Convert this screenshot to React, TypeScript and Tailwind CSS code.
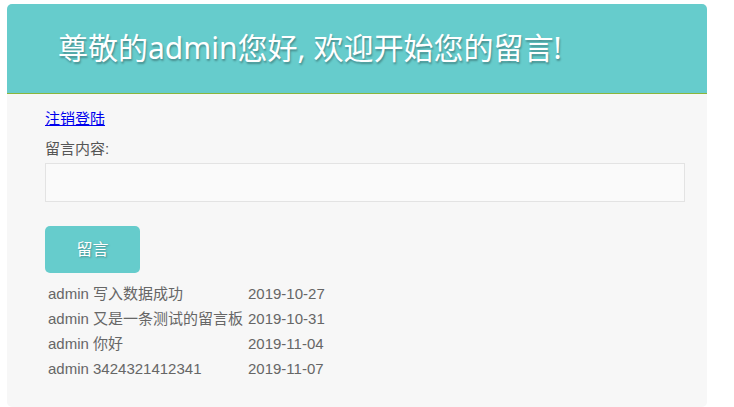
const messages = [
	{ user: "admin", content: "写入数据成功", date: "2019-10-27" },
	{ user: "admin", content: "又是一条测试的留言板", date: "2019-10-31" },
	{ user: "admin", content: "你好", date: "2019-11-04" },
	{ user: "admin", content: "3424321412341", date: "2019-11-07" },
];

const App = () => {
	return (
		<div className="min-h-[407px] bg-white pl-[7px] pt-[4px] font-['Liberation_Sans','Noto_Sans_CJK_SC',sans-serif]">
			<div className="w-[700px] overflow-hidden rounded-[5px] bg-[#f7f7f7]">
				<div className="flex h-[90px] items-center border-b border-[#8ab63c] bg-[#66cccc] pb-[2px] pl-[51px]">
					<h1 className="font-['Noto_Sans','Noto_Sans_CJK_SC',sans-serif] text-[30px] font-normal text-white [text-shadow:1px_2px_2px_rgba(0,0,0,0.3)]">
						尊敬的admin您好, 欢迎开始您的留言!
					</h1>
				</div>
				<div className="pb-[25px] pl-[38px] pt-[14px]">
					<div className="leading-[22px]">
						<a href="#" className="text-[15px] text-[#0000ee] underline">
							注销登陆
						</a>
					</div>
					<form className="mt-[9px] flex flex-col">
						<label className="text-[15px] leading-[20px] text-[#555]">留言内容:</label>
						<input
							type="text"
							className="mt-[4px] h-[39px] w-[640px] border border-[#e3e3e3] bg-[#fafafa] outline-none"
						/>
						<button
							type="button"
							className="mt-[24px] h-[47px] w-[95px] rounded-[5px] bg-[#66cccc] text-[16px] text-white [text-shadow:1px_1px_2px_rgba(0,0,0,0.3)]"
						>
							留言
						</button>
					</form>
					<table className="ml-[1px] mt-[9px] text-[15px] text-[#666]">
						<tbody>
							{messages.map((m) => (
								<tr key={m.date} className="h-[25px]">
									<td className="w-[200px] pl-[2px] pr-[2px]">
										{m.user} {m.content}
									</td>
									<td className="pl-[2px]">{m.date}</td>
								</tr>
							))}
						</tbody>
					</table>
				</div>
			</div>
		</div>
	);
};

export default App;
